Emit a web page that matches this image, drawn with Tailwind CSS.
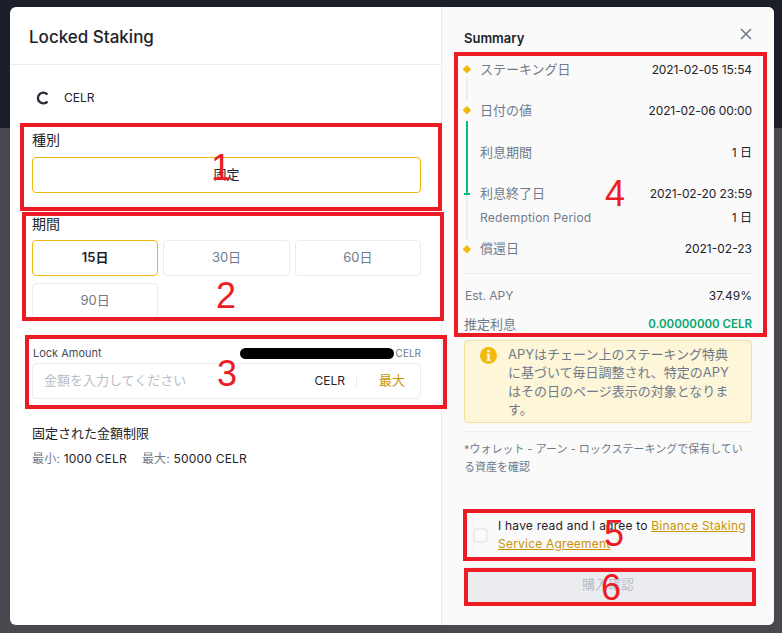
<!DOCTYPE html>
<html lang="ja">
<head>
    <meta charset="UTF-8">
    <meta name="viewport" content="width=device-width, initial-scale=1.0">
    <title>Locked Staking</title>
    <script src="https://cdn.jsdelivr.net/npm/@tailwindcss/browser@4"></script>
</head>
<body class="relative w-[782px] h-[633px] overflow-hidden bg-[#47494e] font-['Inter','Noto_Sans_CJK_JP',sans-serif] text-[#1e2329]">
    <!-- page behind the modal -->
    <div class="h-[128px] bg-[#1c1f2a]"></div>

    <!-- modal -->
    <div class="absolute left-[10px] top-[7px] w-[764px] h-[618px] flex rounded-md overflow-hidden bg-white">
        <div class="w-[432px] shrink-0 border-r border-[#eaecef]">
            <div class="h-[58px] border-b border-[#eaecef] pl-[19px] pt-[3px] flex items-center">
                <h1 class="text-[17px] font-medium leading-none">Locked Staking</h1>
            </div>
            <div class="pl-[22px] pr-[20px]">
                <div class="h-[65px] flex items-center pl-[4px] pt-[1px] gap-[14px] text-[12px]">
                    <svg class="w-[14px] h-[14px]" viewBox="0 0 14 14" fill="none"><path d="M11.5 3.6A5.4 5.4 0 1 0 11.5 10.4" stroke="#2b2f3a" stroke-width="2.4"/></svg>
                    <span>CELR</span>
                </div>
                <div class="text-[14px] leading-[20px]">種別</div>
                <div class="mt-[7px] h-[36px] border border-[#f0b90b] rounded flex items-center justify-center text-[13px]">固定</div>
                <div class="text-[14px] leading-[20px] mt-[21px]">期間</div>
                <div class="mt-[6px] grid grid-cols-3 gap-x-[5px] gap-y-[7px] text-[13px] text-[#707a8a]">
                    <div class="h-[36px] border border-[#f0b90b] rounded flex items-center justify-center font-semibold text-[#1e2329]">15日</div>
                    <div class="h-[36px] border border-[#eaecef] rounded flex items-center justify-center">30日</div>
                    <div class="h-[36px] border border-[#eaecef] rounded flex items-center justify-center">60日</div>
                    <div class="h-[36px] border border-[#eaecef] rounded flex items-center justify-center">90日</div>
                </div>
                <div class="mt-[27px] flex justify-between items-center h-[14px] text-[11px] text-[#474d57] pl-px">
                    <span>Lock Amount</span>
                    <span class="flex items-center gap-[2px] text-[#707a8a]"><span class="w-[154px] h-[11px] rounded-full bg-black"></span><span class="text-[10px]">CELR</span></span>
                </div>
                <div class="mt-[3px] h-[36px] border border-[#eaecef] rounded flex items-center pl-[11px] pr-[15px]">
                    <span class="text-[13px] text-[#b7bdc6] flex-1">金額を入力してください</span>
                    <span class="text-[12px]">CELR</span>
                    <span class="w-px h-[12px] bg-[#eaecef] mx-[11px]"></span>
                    <span class="text-[13px] text-[#c99400] ml-[11px]">最大</span>
                </div>
                <div class="mt-[25px] text-[13px] leading-[18px]">固定された金額制限</div>
                <div class="mt-[8px] text-[12px] leading-[18px] flex gap-[15px] tracking-[0.2px]">
                    <span><span class="text-[#707a8a]">最小:</span> 1000 CELR</span>
                    <span><span class="text-[#707a8a]">最大:</span> 50000 CELR</span>
                </div>
            </div>
        </div>

        <div class="flex-1 bg-[#fafafa] pl-[22px] pr-[22px] relative">
            <svg class="absolute right-[22px] top-[21px] w-[12px] h-[12px]" viewBox="0 0 12 12" fill="none"><path d="M1 1L11 11M11 1L1 11" stroke="#707a8a" stroke-width="1.6"/></svg>
            <div class="pt-[23px] text-[13px] font-semibold leading-[16px]">Summary</div>

            <div class="mt-[14px] flex">
                <!-- timeline -->
                <div class="w-[5px] flex flex-col items-center pt-[6px] overflow-visible">
                    <span class="w-[5.5px] h-[6px] rotate-45 bg-[#f0b90b] shrink-0"></span>
                    <span class="w-[2px] h-[23px] mt-[5px] bg-[#eaecef] shrink-0"></span>
                    <span class="w-[5.5px] h-[6px] mt-[7px] rotate-45 bg-[#f0b90b] shrink-0"></span>
                    <span class="w-[2px] h-[72px] mt-[8px] bg-[#02c076] shrink-0"></span>
                    <span class="w-[6px] h-[2px] bg-[#02c076] shrink-0"></span>
                    <span class="w-[2px] h-[44px] bg-[#eaecef] shrink-0"></span>
                    <span class="w-[5.5px] h-[6px] mt-[7px] rotate-45 bg-[#f0b90b] shrink-0"></span>
                </div>
                <div class="flex-1 pl-[11px] text-[12px]">
                    <div class="h-[20px] flex justify-between items-center"><span class="text-[13px] text-[#707a8a]">ステーキング日</span><span class="tracking-[-0.1px]">2021-02-05 15:54</span></div>
                    <div class="h-[20px] mt-[21px] flex justify-between items-center"><span class="text-[13px] text-[#707a8a]">日付の値</span><span class="tracking-[-0.1px]">2021-02-06 00:00</span></div>
                    <div class="h-[20px] mt-[22px] flex justify-between items-center"><span class="text-[13px] text-[#707a8a]">利息期間</span><span>1 日</span></div>
                    <div class="h-[20px] mt-[21px] flex justify-between items-center"><span class="text-[13px] text-[#707a8a]">利息終了日</span><span class="tracking-[-0.1px]">2021-02-20 23:59</span></div>
                    <div class="h-[20px] mt-[4px] flex justify-between items-center"><span class="text-[#707a8a] tracking-[0.2px]">Redemption Period</span><span>1 日</span></div>
                    <div class="h-[20px] mt-[11px] flex justify-between items-center"><span class="text-[13px] text-[#707a8a]">償還日</span><span>2021-02-23</span></div>
                </div>
            </div>

            <div class="mt-[14px] border-t border-[#eaecef] text-[12px]">
                <div class="h-[20px] mt-[12px] flex justify-between items-center"><span class="text-[#707a8a] pl-px">Est. APY</span><span>37.49%</span></div>
                <div class="h-[20px] mt-[9px] flex justify-between items-center"><span class="text-[13px] text-[#707a8a]">推定利息</span><span class="text-[11.5px] font-semibold text-[#03a66d]">0.00000000 CELR</span></div>
            </div>

            <div class="mt-[5px] h-[83px] bg-[#fef6d8] border border-[#f0e29a] rounded flex pl-[15px] pr-[16px] pt-[4px] gap-[11px] text-[13px] leading-[18.3px] text-[#707a8a]">
                <svg class="w-[17px] h-[17px] shrink-0 mt-[2px]" viewBox="0 0 17 17"><circle cx="8.5" cy="8.5" r="8.5" fill="#f0b90b"/><rect x="7.3" y="3" width="2.4" height="2.4" fill="#fff"/><path d="M6.6 7H9.7V12.4H10.6V14H6.6V12.4H7.5V8.5H6.6Z" fill="#fff"/></svg>
                <p>APYはチェーン上のステーキング特典に基づいて毎日調整され、特定のAPYはその日のページ表示の対象となります。</p>
            </div>

            <div class="mt-[8px] border-t border-[#eaecef] pt-[8px] text-[11px] leading-[18px] text-[#707a8a]">*ウォレット - アーン - ロックステーキングで保有している資産を確認</div>

            <div class="mt-[41px] flex items-center pl-[9px] gap-[10px] text-[12px] leading-[18px] tracking-[0.22px]">
                <span class="w-[15px] h-[15px] border-2 border-[#eaecef] rounded-sm shrink-0"></span>
                <p>I have read and I agree to <a class="text-[#c99400] underline">Binance Staking Service Agreement</a></p>
            </div>

            <div class="mt-[14px] h-[36px] bg-[#eaecef] rounded flex items-center justify-center text-[13px] text-[#b7bdc6]">購入確認</div>
        </div>
    </div>

    <!-- red annotations drawn over the screenshot -->
    <div class="absolute left-[20px] top-[123px] w-[422px] h-[88px] border-4 border-[#ed1c24] flex items-center justify-center text-[36px] text-[#ed1c24] font-['Liberation_Sans',sans-serif]"><span class="mt-[2px] mr-[20px]">1</span></div>
    <div class="absolute left-[22px] top-[212px] w-[422px] h-[109px] border-4 border-[#ed1c24] text-[36px] text-[#ed1c24] font-['Liberation_Sans',sans-serif]"><span class="absolute left-[190px] top-[62px] leading-none">2</span></div>
    <div class="absolute left-[25px] top-[335px] w-[422px] h-[74px] border-4 border-[#ed1c24] text-[36px] text-[#ed1c24] font-['Liberation_Sans',sans-serif]"><span class="absolute left-[188px] top-[17px] leading-none">3</span></div>
    <div class="absolute left-[454px] top-[52px] w-[313px] h-[285px] border-4 border-[#ed1c24] text-[36px] text-[#ed1c24] font-['Liberation_Sans',sans-serif]"><span class="absolute left-[147px] top-[120px] leading-none">4</span></div>
    <div class="absolute left-[463px] top-[509px] w-[292px] h-[52px] border-4 border-[#ed1c24] text-[36px] text-[#ed1c24] font-['Liberation_Sans',sans-serif]"><span class="absolute left-[137px] top-[3px] leading-none">5</span></div>
    <div class="absolute left-[464px] top-[568px] w-[292px] h-[38px] border-4 border-[#ed1c24] text-[36px] text-[#ed1c24] font-['Liberation_Sans',sans-serif]"><span class="absolute left-[133px] top-[-2px] leading-none">6</span></div>
</body>
</html>
